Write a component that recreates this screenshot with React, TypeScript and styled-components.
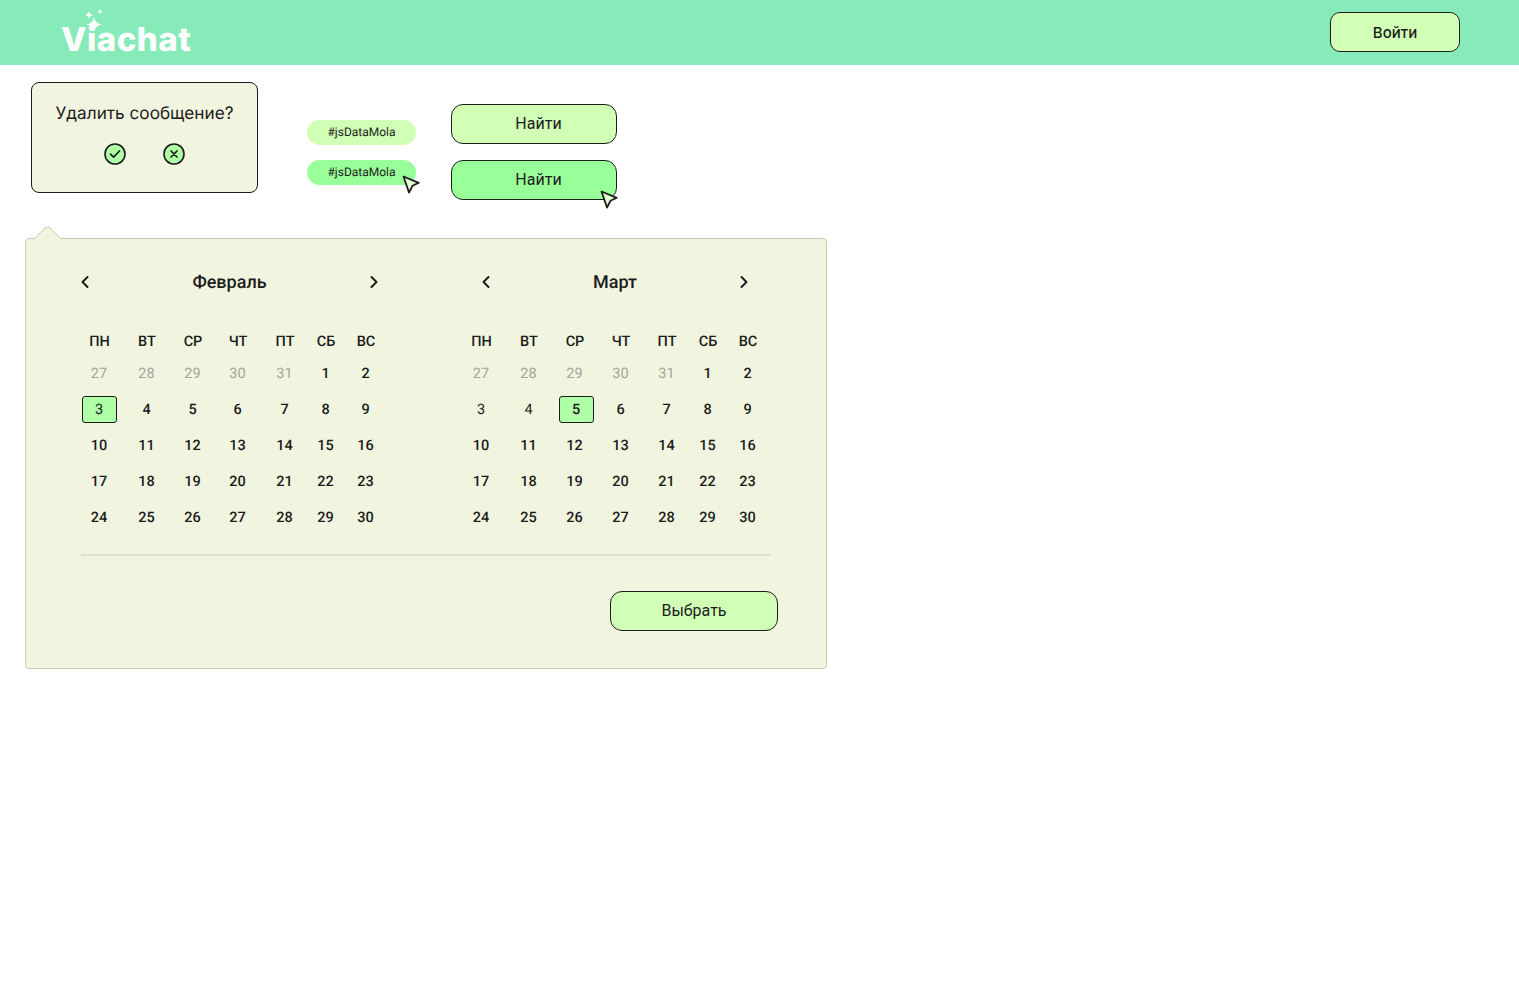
import React from 'react';
import styled, { createGlobalStyle } from 'styled-components';

const GlobalStyle = createGlobalStyle`
  html, body {
    margin: 0;
    padding: 0;
    background: #fff;
    font-family: 'Inter', 'Roboto', sans-serif;
    color: #1c1c1c;
    text-rendering: geometricPrecision;
  }
`;

const Header = styled.header`
  height: 65px;
  background-color: #87ebb9;
  display: flex;
  align-items: flex-end;
  justify-content: space-between;
  padding: 0 59px 0 61px;
`;

const Logo = styled.div`
  position: relative;
  box-sizing: border-box;
  height: 65px;
  display: flex;
  align-items: flex-end;
  padding-bottom: 6px;
  font-family: 'Inter', sans-serif;
  font-weight: 800;
  font-size: 33px;
  line-height: 40px;
  letter-spacing: 0.5px;
  color: #fff;
`;

const LogoStars = styled.svg`
  position: absolute;
  left: 21px;
  top: 9px;
`;

const HeaderButton = styled.button`
  align-self: center;
  width: 130px;
  height: 40px;
  margin-bottom: 1px;
  border: 1px solid #1c1c1c;
  border-radius: 10px;
  background: #d1ffb6;
  font-family: 'Inter', sans-serif;
  font-weight: 500;
  font-size: 15px;
  color: #1c1c1c;
`;

const Main = styled.main`
  padding: 17px 0 0 25px;
`;

const TopRow = styled.div`
  display: flex;
  align-items: flex-start;
  margin-bottom: 38px;
`;

const Confirm = styled.div`
  box-sizing: border-box;
  width: 227px;
  height: 111px;
  margin-left: 6px;
  margin-right: 49px;
  border: 1px solid #1c1c1c;
  border-radius: 8px;
  background: #f1f5df;
  display: flex;
  flex-direction: column;
  align-items: center;
  padding-top: 20px;
`;

const ConfirmText = styled.div`
  font-family: 'Inter', sans-serif;
  font-size: 17.2px;
  line-height: 22px;
`;

const ConfirmIcons = styled.div`
  display: flex;
  gap: 37px;
  margin-top: 18px;
`;

const Tags = styled.div`
  display: flex;
  flex-direction: column;
  gap: 15px;
  margin-top: 38px;
  margin-right: 35px;
`;

const Tag = styled.div<{ $hover?: boolean }>`
  position: relative;
  width: 109px;
  height: 25px;
  border-radius: 13px;
  background: ${props => (props.$hover ? '#99ff99' : '#d1ffb6')};
  font-family: 'Roboto', sans-serif;
  font-size: 12px;
  line-height: 24px;
  text-align: center;
`;

const Buttons = styled.div`
  display: flex;
  flex-direction: column;
  gap: 16px;
  margin-top: 22px;
`;

const FindButton = styled.button<{ $hover?: boolean }>`
  position: relative;
  width: 166px;
  height: 40px;
  padding: 0 0 2px 9px;
  border: 1px solid #1c1c1c;
  border-radius: 12px;
  background: ${props => (props.$hover ? '#99ff99' : '#d1ffb6')};
  font-family: 'Roboto', sans-serif;
  font-size: 16px;
  color: #1c1c1c;
`;

const Pointer = styled.svg<{ $right: number; $bottom: number }>`
  position: absolute;
  right: ${props => props.$right}px;
  bottom: ${props => props.$bottom}px;
`;

const Panel = styled.section`
  position: relative;
  box-sizing: border-box;
  width: 802px;
  height: 431px;
  border: 1px solid #c9cbb8;
  border-radius: 4px;
  background: #f1f5df;
  padding: 30px 48px 0 56px;
`;

const PanelTail = styled.svg`
  position: absolute;
  left: 6px;
  top: -13px;
`;

const Months = styled.div`
  display: flex;
`;

const Month = styled.div<{ $offset: number }>`
  margin-left: ${props => props.$offset}px;
`;

const MonthHead = styled.div<{ $left: number; $width: number }>`
  display: flex;
  align-items: center;
  justify-content: space-between;
  box-sizing: border-box;
  width: ${props => props.$width}px;
  margin-left: ${props => props.$left}px;
  height: 26px;
  margin-bottom: 35px;
`;

const MonthTitle = styled.div`
  font-family: 'Roboto', sans-serif;
  font-size: 18px;
  font-weight: 500;
`;

const DayGrid = styled.div<{ $cols: string }>`
  display: grid;
  grid-template-columns: ${props => props.$cols};
  grid-template-rows: 28px;
  grid-auto-rows: 36px;
  margin-top: -3px;
`;

const WeekName = styled.div`
  font-family: 'Roboto', sans-serif;
  font-size: 14.5px;
  font-weight: 500;
  height: 28px;
  display: flex;
  align-items: center;
  justify-content: center;
`;

const Day = styled.div<{ $muted?: boolean; $light?: boolean; $selected?: boolean }>`
  box-sizing: border-box;
  align-self: center;
  height: 27px;
  padding-right: 1px;
  display: flex;
  align-items: center;
  justify-content: center;
  font-family: 'Roboto', sans-serif;
  font-size: 14.5px;
  font-weight: ${props => (props.$muted || props.$light ? 400 : 500)};
  color: ${props => (props.$muted ? '#a3a59a' : '#1c1c1c')};
  border-radius: 3px;
  ${props => props.$selected && 'width: 35px; background: #afffa6; border: 1px solid #1c1c1c;'}
`;

const Divider = styled.div`
  height: 2px;
  background: #dfe1cf;
  width: 690px;
  margin: 19px 0 35px -1px;
`;

const Footer = styled.div`
  display: flex;
  justify-content: flex-end;
  width: 696px;
`;

const SelectButton = styled.button`
  width: 168px;
  height: 40px;
  padding: 0 0 2px;
  border: 1px solid #1c1c1c;
  border-radius: 12px;
  background: #d1ffb6;
  font-family: 'Roboto', sans-serif;
  font-size: 16px;
  color: #1c1c1c;
`;

const WEEK = ['ПН', 'ВТ', 'СР', 'ЧТ', 'ПТ', 'СБ', 'ВС'];

const PREV_DAYS = [27, 28, 29, 30, 31];
const DAYS = Array.from({ length: 30 }, (_, i) => i + 1);

const MONTHS = [
  {
    name: 'Февраль',
    selected: 3,
    lightDays: [3],
    offset: 0,
    cols: '35px 60px 32px 58px 36px 46px 34px',
    headLeft: -2,
    headWidth: 299,
  },
  {
    name: 'Март',
    selected: 5,
    lightDays: [3, 4],
    offset: 81,
    cols: '35px 60px 32px 60px 32px 50px 30px',
    headLeft: 17,
    headWidth: 268,
  },
];

const Chevron = ({ right = false }: { right?: boolean }) => (
  <svg width="10" height="14" viewBox="0 0 10 14" fill="none">
    <path
      d={right ? 'M2.5 2L7.5 7L2.5 12' : 'M7.5 2L2.5 7L7.5 12'}
      stroke="#1c1c1c"
      strokeWidth="2"
      strokeLinecap="round"
      strokeLinejoin="round"
    />
  </svg>
);

const CursorIcon = ({ right, bottom }: { right: number; bottom: number }) => (
  <Pointer $right={right} $bottom={bottom} width="18" height="19" viewBox="0 0 18 19" fill="none">
    <path
      d="M1.5 1.5L16.8 7.8L10.5 10.8L7 17.5Z"
      fill="#dfffd0"
      stroke="#1c1c1c"
      strokeWidth="1.8"
      strokeLinejoin="round"
    />
  </Pointer>
);

const RoundIcon = ({ children }: { children: React.ReactNode }) => (
  <svg width="22" height="22" viewBox="0 0 22 22" fill="none">
    <circle cx="11" cy="11" r="10" fill="#afffa6" stroke="#1c1c1c" strokeWidth="1.6" />
    {children}
  </svg>
);

const MonthView = ({ month }: { month: (typeof MONTHS)[number] }) => (
  <Month $offset={month.offset}>
    <MonthHead $left={month.headLeft} $width={month.headWidth}>
      <Chevron />
      <MonthTitle>{month.name}</MonthTitle>
      <Chevron right />
    </MonthHead>
    <DayGrid $cols={month.cols}>
      {WEEK.map(name => (
        <WeekName key={name}>{name}</WeekName>
      ))}
      {PREV_DAYS.map(day => (
        <Day key={`prev-${day}`} $muted>
          {day}
        </Day>
      ))}
      {DAYS.map(day => (
        <Day key={day} $light={month.lightDays.includes(day)} $selected={day === month.selected}>
          {day}
        </Day>
      ))}
    </DayGrid>
  </Month>
);

export default function App() {
  return (
    <>
      <GlobalStyle />
      <Header>
        <Logo>
          Viachat
          <LogoStars width="34" height="30" viewBox="0 0 34 30" fill="#fff">
            <path d="M12 8 Q13 14.5 20 15.5 Q13 16.5 12 23 Q11 16.5 4 15.5 Q11 14.5 12 8Z" />
            <path d="M7 2 Q7.5 5.2 11 6 Q7.5 6.8 7 10 Q6.5 6.8 3 6 Q6.5 5.2 7 2Z" />
            <path d="M18 0 Q18.4 2 20.5 2.5 Q18.4 3 18 5 Q17.6 3 15.5 2.5 Q17.6 2 18 0Z" />
          </LogoStars>
        </Logo>
        <HeaderButton>Войти</HeaderButton>
      </Header>
      <Main>
        <TopRow>
          <Confirm>
            <ConfirmText>Удалить сообщение?</ConfirmText>
            <ConfirmIcons>
              <RoundIcon>
                <path
                  d="M6.5 11.2L9.6 14.2L15.5 8"
                  stroke="#1c1c1c"
                  strokeWidth="1.7"
                  strokeLinecap="round"
                  strokeLinejoin="round"
                />
              </RoundIcon>
              <RoundIcon>
                <path
                  d="M8 8L14 14M14 8L8 14"
                  stroke="#1c1c1c"
                  strokeWidth="1.7"
                  strokeLinecap="round"
                />
              </RoundIcon>
            </ConfirmIcons>
          </Confirm>
          <Tags>
            <Tag>#jsDataMola</Tag>
            <Tag $hover>
              #jsDataMola
              <CursorIcon right={-4} bottom={-9} />
            </Tag>
          </Tags>
          <Buttons>
            <FindButton>Найти</FindButton>
            <FindButton $hover>
              Найти
              <CursorIcon right={-2} bottom={-10} />
            </FindButton>
          </Buttons>
        </TopRow>
        <Panel>
          <PanelTail width="32" height="14" viewBox="0 0 32 14">
            <path d="M1 14 L13 2 Q15.5 0 18 2 L30 14" fill="#f1f5df" stroke="#c9cbb8" />
            <rect x="1.5" y="13" width="28" height="1.5" fill="#f1f5df" />
          </PanelTail>
          <Months>
            {MONTHS.map(month => (
              <MonthView key={month.name} month={month} />
            ))}
          </Months>
          <Divider />
          <Footer>
            <SelectButton>Выбрать</SelectButton>
          </Footer>
        </Panel>
      </Main>
    </>
  );
}
